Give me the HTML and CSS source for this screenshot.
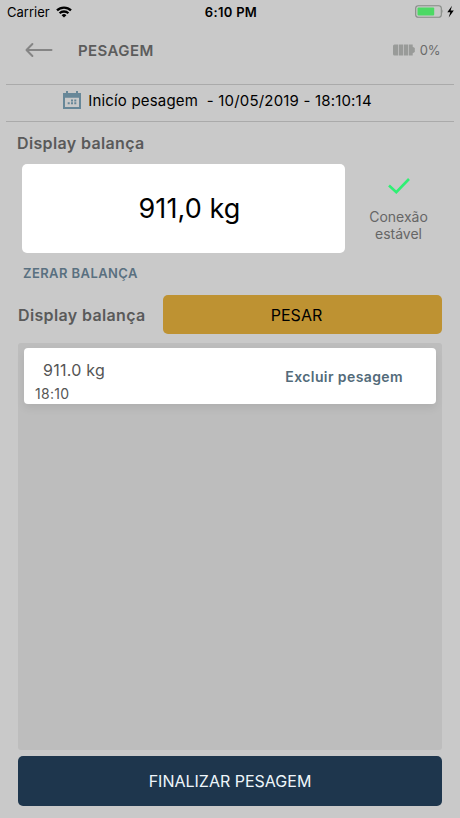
FILE: index.html
```html
<!DOCTYPE html>
<html lang="pt-BR">
<head>
    <meta charset="UTF-8">
    <meta name="viewport" content="width=device-width, initial-scale=1.0">
    <title>Pesagem</title>
    <link rel="stylesheet" href="styles.css">
</head>
<body>
    <div class="status-bar">
        <div class="carrier">
            <span>Carrier</span>
            <svg width="16" height="12" viewBox="0 0 16 12" fill="none" stroke="#000" stroke-width="2.3">
                <path d="M1 4.4a10 10 0 0 1 14 0"/>
                <path d="M3.6 7.3a6.3 6.3 0 0 1 8.8 0"/>
                <path d="M8 11.6L5.6 9.2a3.5 3.5 0 0 1 4.8 0z" fill="#000" stroke="none"/>
            </svg>
        </div>
        <span class="clock">6:10 PM</span>
        <div class="power">
            <svg width="40" height="14" viewBox="0 0 40 14">
                <rect x="0.7" y="0.7" width="25.6" height="11.6" rx="2.6" fill="none" stroke="#858a85" stroke-width="1.1"/>
                <rect x="2.5" y="2.4" width="16.7" height="8.2" rx="1" fill="#4cd964"/>
                <path d="M27.5 4.3q1.5 2.2 0 4.4z" fill="#858a85"/>
                <path d="M37 0.7L32.3 7.3H35.3L33.7 12.5L38.8 5.6H35.6z" fill="#000"/>
            </svg>
        </div>
    </div>

    <header class="header">
        <svg class="back" width="28" height="16" viewBox="0 0 28 16" fill="none" stroke="#858585" stroke-width="2" stroke-linecap="round" stroke-linejoin="round">
            <path d="M7.4 2L1.5 8l5.9 6M2 8h24.5"/>
        </svg>
        <h1>PESAGEM</h1>
        <div class="scale-battery">
            <svg width="22" height="12" viewBox="0 0 22 12" fill="#999b99">
                <path d="M1.5 0.5H5v11H1.5q-1.5 0-1.5-1.5V2Q0 0.5 1.5 0.5zM5.7 0.5h4.3v11H5.7zM10.7 0.5H15v11h-4.3zM15.7 0.5h4V2.7l2.1 1.3v4l-2.1 1.3v2.2h-4z"/>
            </svg>
            <span>0%</span>
        </div>
    </header>

    <div class="start-info">
        <svg width="18" height="18" viewBox="0 0 18 18">
            <path d="M1 3.5h16V17H1z" fill="none" stroke="#678798" stroke-width="2"/>
            <path d="M0 2h18v4.7H0zM3 0h2v3H3zM13 0h2v3h-2z" fill="#678798"/>
            <path d="M8 8.5h2v2H8zM11.3 8.5h2v2h-2zM4.7 11.3h2v2h-2zM8 11.3h2v2H8zM11.3 11.3h2v2h-2z" fill="#678798"/>
        </svg>
        <span>Inicío pesagem&nbsp; - 10/05/2019 - 18:10:14</span>
    </div>

    <main class="content">
        <h2 class="display-title">Display balança</h2>
        <div class="scale">
            <div class="display">911,0 kg</div>
            <div class="connection">
                <svg width="22" height="16" viewBox="0 0 22 16" fill="none" stroke="#2ff074" stroke-width="2.6">
                    <path d="M1 7.5l7.3 6.7L21 1"/>
                </svg>
                <p>Conexão<br>estável</p>
            </div>
        </div>
        <a class="reset-link">ZERAR BALANÇA</a>

        <div class="weigh-row">
            <h2>Display balança</h2>
            <button class="weigh-button">PESAR</button>
        </div>

        <div class="list">
            <div class="list-item">
                <div class="weight">
                    <span class="value">911.0 kg</span>
                    <span class="time">18:10</span>
                </div>
                <a class="delete-link">Excluir pesagem</a>
            </div>
        </div>

        <button class="finish-button">FINALIZAR PESAGEM</button>
    </main>
</body>
</html>
```
FILE: styles.css
```css
* {
    box-sizing: border-box;
}

body {
    margin: 0;
    height: 818px;
    display: flex;
    flex-direction: column;
    background-color: #c9c9c9;
    color: #000;
    font-family: Inter, "Liberation Sans", sans-serif;
    overflow: hidden;
}

h1, h2, p {
    margin: 0;
}

svg {
    display: block;
    flex-shrink: 0;
}

button {
    border: none;
    border-radius: 5px;
    padding: 0;
    font-family: inherit;
    font-size: 16px;
}

.status-bar {
    display: grid;
    grid-template-columns: 1fr auto 1fr;
    align-items: center;
    height: 24px;
    padding: 0 5px 0 7px;
    font-size: 13px;
}

.carrier {
    display: flex;
    align-items: center;
    gap: 6px;
}

.clock {
    font-weight: 600;
    letter-spacing: 0.3px;
}

.power {
    display: flex;
    justify-content: flex-end;
}

.header {
    display: flex;
    align-items: center;
    height: 60px;
    padding: 0 20px 8px 25px;
}

.header h1 {
    margin-left: 25px;
    font-size: 15px;
    font-weight: 600;
    letter-spacing: 0.4px;
    color: #5c5c5c;
}

.scale-battery {
    display: flex;
    align-items: center;
    gap: 5px;
    margin-left: auto;
    font-size: 13px;
    letter-spacing: -0.4px;
    color: #6a6a6a;
}

.start-info {
    display: flex;
    justify-content: center;
    align-items: center;
    gap: 7px;
    height: 38px;
    margin: 0 6px;
    padding: 0 25px 6px 0;
    border-top: 1px solid #aaa;
    border-bottom: 1px solid #aaa;
    font-size: 15px;
    letter-spacing: 0.18px;
}

.content {
    flex: 1;
    display: flex;
    flex-direction: column;
    padding: 11px 18px 12px;
}

.content h2 {
    font-size: 16px;
    line-height: 20px;
    font-weight: 600;
    letter-spacing: 0.36px;
    color: #5a5a5a;
}

.content .display-title {
    margin-left: -1px;
}

.scale {
    display: flex;
    margin-top: 11px;
    padding-left: 4px;
}

.display {
    display: flex;
    justify-content: center;
    align-items: center;
    width: 323px;
    height: 89px;
    padding-left: 12px;
    background-color: #fff;
    border-radius: 5px;
    font-size: 27px;
    letter-spacing: 0.1px;
}

.connection {
    flex: 1;
    display: flex;
    flex-direction: column;
    align-items: center;
    padding: 14px 0 0 10px;
    text-align: center;
    font-size: 14px;
    line-height: 17px;
    color: #666;
}

.connection p {
    margin-top: 14px;
}

.reset-link {
    margin: 12px 0 0 5px;
    font-size: 13px;
    line-height: 16px;
    font-weight: 600;
    letter-spacing: 0.42px;
    color: #597080;
}

.weigh-row {
    display: flex;
    align-items: center;
    justify-content: space-between;
    margin-top: 14px;
}

.weigh-button {
    width: 279px;
    height: 39px;
    padding-right: 12px;
    background-color: #be9232;
    color: #000;
}

.list {
    flex: 1;
    margin: 9px 0 6px;
    padding: 5px 6px 0;
    background-color: #bdbdbd;
    border-radius: 3px;
}

.list-item {
    display: flex;
    justify-content: space-between;
    align-items: center;
    height: 56px;
    padding: 0 33px 0 11px;
    background-color: #fff;
    border-radius: 4px;
    box-shadow: 0 4px 8px rgba(0, 0, 0, 0.08);
}

.weight {
    display: flex;
    flex-direction: column;
    padding-top: 11px;
    color: #555;
}

.value {
    margin-left: 8px;
    font-size: 16px;
    line-height: 24px;
    letter-spacing: 0.25px;
}

.time {
    font-size: 14px;
    line-height: 23px;
    letter-spacing: 0.3px;
}

.delete-link {
    font-size: 14px;
    font-weight: 600;
    letter-spacing: 0.4px;
    color: #536b7a;
}

.finish-button {
    height: 50px;
    background-color: #1e364d;
    color: #eef6fb;
}
```
